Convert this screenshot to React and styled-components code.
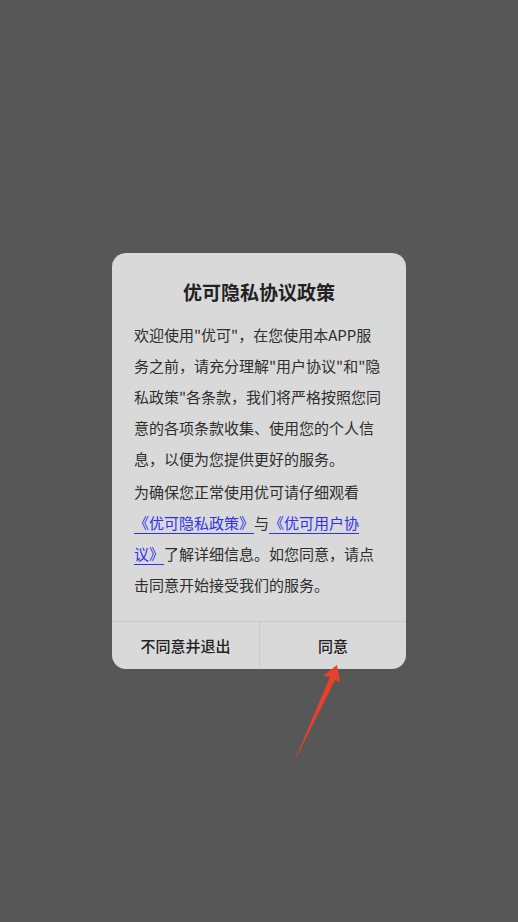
import React from "react";
import styled, { createGlobalStyle } from "styled-components";

const GlobalStyle = createGlobalStyle`
  html, body {
    margin: 0;
    padding: 0;
    background: #575757;
  }
  body {
    font-family: "Noto Sans CJK SC", "Noto Sans", sans-serif;
    text-spacing-trim: space-all;
  }
`;

/* BACKDROP */
const Screen = styled.div`
  width: 518px;
  height: 922px;
  display: flex;
  align-items: center;
  justify-content: center;
  background: #575757;
`;

/* DIALOG */
const Dialog = styled.div`
  position: relative;
  width: 294px;
  height: 416px;
  display: flex;
  flex-direction: column;
  border-radius: 14px;
  background: #d9d9d9;
`;

const Title = styled.h2`
  margin: 0;
  padding-top: 24px;
  font-size: 19px;
  line-height: 30px;
  font-weight: 700;
  color: #222;
  text-align: center;
`;

const Body = styled.div`
  flex: 1;
  padding: 12px 24px 0 22px;
`;

const Para = styled.p`
  margin: 0 0 2px;
  font-size: 15px;
  line-height: 31px;
  color: #2e2e2e;
  text-spacing-trim: space-all;
`;

const Link = styled.a`
  color: #2f2ff5;
  text-decoration: underline;
  text-underline-offset: 4px;
`;

/* BUTTONS */
const Actions = styled.div`
  flex: none;
  display: grid;
  grid-template-columns: 1fr 1fr;
  height: 47px;
  border-top: 1px solid #cacaca;
`;

const Action = styled.button`
  border: none;
  background: transparent;
  font-family: inherit;
  font-size: 15px;
  font-weight: 500;
  color: #222;
  border-left: ${(p) => (p.$divided ? "1px solid #cacaca" : "none")};
  padding: 0;
  cursor: pointer;
`;

/* POINTER ARROW */
const Arrow = styled.svg`
  position: absolute;
  left: 178px;
  top: 410px;
  width: 52px;
  height: 103px;
  overflow: visible;
`;

export default function App() {
  return (
    <>
      <GlobalStyle />
      <Screen>
        <Dialog>
          <Title>优可隐私协议政策</Title>
          <Body>
            <Para>
              欢迎使用"优可"，在您使用本APP服务之前，请充分理解"用户协议"和"隐私政策"各条款，我们将严格按照您同意的各项条款收集、使用您的个人信息，以便为您提供更好的服务。
            </Para>
            <Para>
              为确保您正常使用优可请仔细观看
              <Link>《优可隐私政策》</Link>与<Link>《优可用户协议》</Link>
              了解详细信息。如您同意，请点击同意开始接受我们的服务。
            </Para>
          </Body>
          <Actions>
            <Action>不同意并退出</Action>
            <Action $divided>同意</Action>
          </Actions>
          <Arrow viewBox="0 0 52 103">
            <polygon
              points="47,2 33,13 40,14 3,101 45,17 50,19"
              fill="#e8412a"
            />
          </Arrow>
        </Dialog>
      </Screen>
    </>
  );
}
